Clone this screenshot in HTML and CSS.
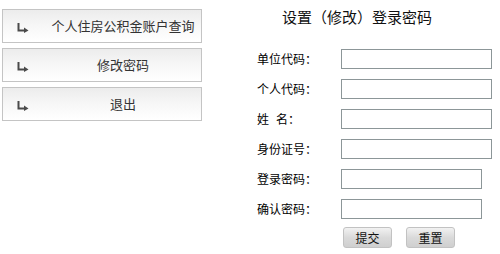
FILE: index.html
```html
<!DOCTYPE html>
<html lang="zh">
<head>
<meta charset="utf-8">
<link rel="stylesheet" href="styles.css">
</head>
<body>
<div class="page">
  <nav class="menu">
    <a class="menu-item"><svg class="arrow" width="12" height="10" viewBox="0 0 12 10"><path d="M1.5 0 V7.5 H8" fill="none" stroke="#4a4a4a" stroke-width="2"/><path d="M7 4.5 L11.5 7.5 L7 10 Z" fill="#4a4a4a"/></svg><span class="menu-text">个人住房公积金账户查询</span></a>
    <a class="menu-item"><svg class="arrow" width="12" height="10" viewBox="0 0 12 10"><path d="M1.5 0 V7.5 H8" fill="none" stroke="#4a4a4a" stroke-width="2"/><path d="M7 4.5 L11.5 7.5 L7 10 Z" fill="#4a4a4a"/></svg><span class="menu-text">修改密码</span></a>
    <a class="menu-item"><svg class="arrow" width="12" height="10" viewBox="0 0 12 10"><path d="M1.5 0 V7.5 H8" fill="none" stroke="#4a4a4a" stroke-width="2"/><path d="M7 4.5 L11.5 7.5 L7 10 Z" fill="#4a4a4a"/></svg><span class="menu-text">退出</span></a>
  </nav>
  <main class="panel">
    <h1 class="title">设置（修改）登录密码</h1>
    <form class="form">
      <label class="label">单位代码：</label><input class="field" type="text">
      <label class="label">个人代码：</label><input class="field" type="text">
      <label class="label">姓<span class="gap"></span>名：</label><input class="field" type="text">
      <label class="label">身份证号：</label><input class="field" type="text">
      <label class="label">登录密码：</label><input class="field short" type="password">
      <label class="label">确认密码：</label><input class="field short" type="password">
      <div class="actions">
        <button type="button" class="btn">提交</button>
        <button type="button" class="btn">重置</button>
      </div>
    </form>
  </main>
</div>
</body>
</html>
```
FILE: styles.css
```css
html, body {
  margin: 0;
  padding: 0;
  background: #ffffff;
}
body {
  font-family: "Noto Sans CJK SC", "Liberation Sans", sans-serif;
  color: #222;
  font-size: 12px;
}
.page {
  display: flex;
  align-items: flex-start;
}
.menu {
  display: flex;
  flex-direction: column;
  gap: 5px;
  padding: 9px 0 0 2px;
  width: 200px;
}
.menu-item {
  display: flex;
  align-items: center;
  height: 34px;
  box-sizing: border-box;
  border: 1px solid #c4c4c4;
  background: linear-gradient(to bottom, #ececec 0%, #f6f6f6 45%, #ffffff 100%);
  color: #333;
  text-decoration: none;
}
.arrow {
  flex: none;
  margin: 3px 0 0 14px;
}
.menu-text {
  flex: 1;
  text-align: center;
  padding-left: 16px;
  font-size: 13px;
  line-height: 16px;
}
.panel {
  margin-left: 55px;
  padding-top: 7px;
}
.title {
  margin: 0 0 0 25px;
  font-size: 15px;
  font-weight: normal;
  line-height: 20px;
  color: #111;
}
.form {
  display: grid;
  grid-template-columns: 84px 151px;
  row-gap: 10px;
  margin-top: 22px;
  align-items: center;
}
.label {
  font-size: 12px;
  line-height: 20px;
  color: #000;
  font-weight: normal;
  margin-top: -1px;
}
.gap {
  display: inline-block;
  width: 7px;
}
.field {
  width: 151px;
  height: 20px;
  box-sizing: border-box;
  border: 1px solid #8c9698;
  margin: 0;
  padding: 0 2px;
  background: #fff;
}
.field.short {
  width: 141px;
}
.actions {
  grid-column: 2;
  display: flex;
  gap: 14px;
  padding-left: 2px;
  margin-top: -2px;
}
.btn {
  width: 49px;
  height: 21px;
  padding: 0;
  border: 1px solid #c2c2c2;
  border-radius: 3px;
  background: linear-gradient(to bottom, #f2f2f2 0%, #dadada 50%, #cfcfcf 100%);
  font-family: "Noto Sans CJK SC", sans-serif;
  font-size: 12px;
  color: #111;
  line-height: 19px;
}
```
